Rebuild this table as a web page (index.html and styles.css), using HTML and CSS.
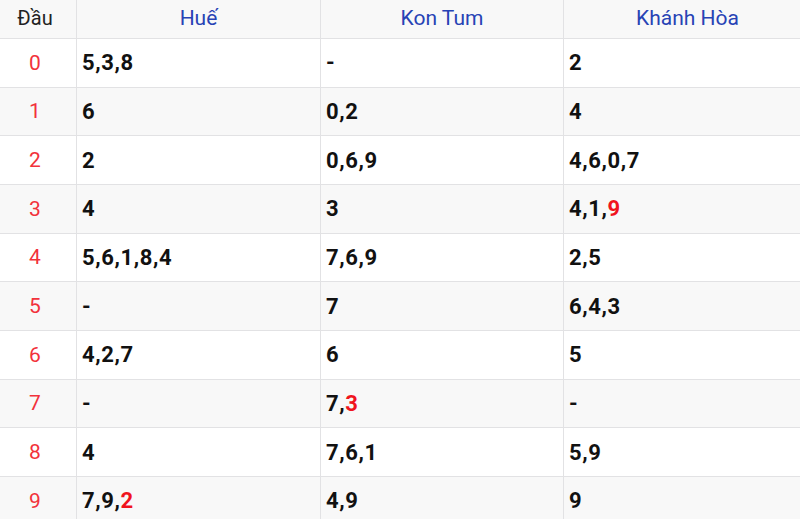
FILE: index.html
```html
<!DOCTYPE html>
<html lang="vi">
<head>
<meta charset="utf-8">
<link rel="stylesheet" href="styles.css">
</head>
<body>
<div class="grid">
  <div class="cell head first">Đầu</div>
  <div class="cell head">Huế</div>
  <div class="cell head">Kon Tum</div>
  <div class="cell head">Khánh Hòa</div>

  <div class="cell first">0</div><div class="cell num">5,3,8</div><div class="cell num">-</div><div class="cell num">2</div>
  <div class="cell first alt">1</div><div class="cell num alt">6</div><div class="cell num alt">0,2</div><div class="cell num alt">4</div>
  <div class="cell first">2</div><div class="cell num">2</div><div class="cell num">0,6,9</div><div class="cell num">4,6,0,7</div>
  <div class="cell first alt">3</div><div class="cell num alt">4</div><div class="cell num alt">3</div><div class="cell num alt">4,1,<span class="hl">9</span></div>
  <div class="cell first">4</div><div class="cell num">5,6,1,8,4</div><div class="cell num">7,6,9</div><div class="cell num">2,5</div>
  <div class="cell first alt">5</div><div class="cell num alt">-</div><div class="cell num alt">7</div><div class="cell num alt">6,4,3</div>
  <div class="cell first">6</div><div class="cell num">4,2,7</div><div class="cell num">6</div><div class="cell num">5</div>
  <div class="cell first alt">7</div><div class="cell num alt">-</div><div class="cell num alt">7,<span class="hl">3</span></div><div class="cell num alt">-</div>
  <div class="cell first">8</div><div class="cell num">4</div><div class="cell num">7,6,1</div><div class="cell num">5,9</div>
  <div class="cell first alt">9</div><div class="cell num alt">7,9,<span class="hl">2</span></div><div class="cell num alt">4,9</div><div class="cell num alt">9</div>
</div>
</body>
</html>
```
FILE: styles.css
```css
html, body {
  margin: 0;
  padding: 0;
  overflow: hidden;
  background: #ffffff;
}
body {
  width: 800px;
  height: 519px;
  font-family: Roboto, "Noto Sans", sans-serif;
}
.grid {
  display: grid;
  width: 811px;
  grid-template-columns: 76px 243px 242px 247px;
  grid-template-rows: 38px repeat(10, 47.67px);
  column-gap: 1px;
  row-gap: 1px;
  background: #e2e2e4;
}
.cell {
  display: flex;
  align-items: center;
  background: #ffffff;
  color: #111111;
}
.cell.alt, .cell.head {
  background: #f8f8f8;
}
.head {
  justify-content: center;
  font-size: 21px;
  color: #2743b5;
  padding-bottom: 3px;
}
.head.first {
  font-size: 20px;
  color: #222222;
  padding-right: 6px;
}
.first {
  justify-content: center;
  font-size: 21px;
  color: #f2323b;
  padding-right: 6px;
}
.num {
  padding-left: 5px;
  font-size: 22px;
  font-weight: 700;
  letter-spacing: 0.6px;
}
.hl {
  color: #f0141e;
}
```
